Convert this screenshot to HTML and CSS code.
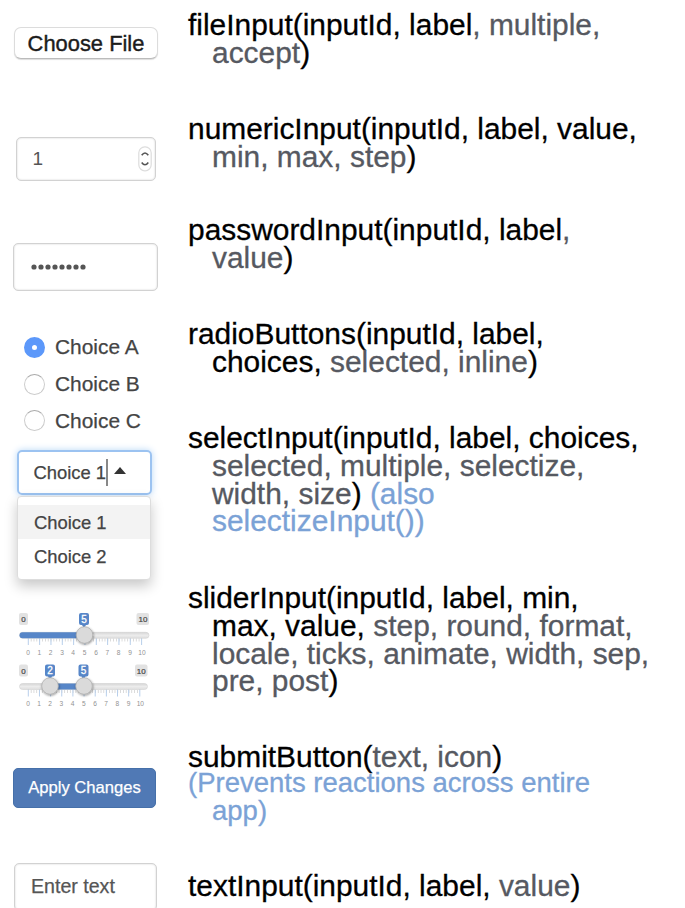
FILE: index.html
```html
<!DOCTYPE html>
<html lang="en">
<head>
<meta charset="utf-8">
<title>Shiny inputs</title>
<link rel="stylesheet" href="styles.css">
</head>
<body>
<main class="sheet">
  <section class="widgets">
    <button class="file">Choose File</button>
    <div class="box numeric"><span>1</span>
      <svg class="stepper" width="14" height="26" viewBox="0 0 14 26"><rect x=".8" y=".8" width="12.4" height="24" rx="6" fill="#fff" stroke="#ddd" stroke-width="1.2"/><path d="M3.700 9.200Q7 4.800 10.300 9.200M3.700 16.500Q7 20.900 10.300 16.500" fill="none" stroke="#555" stroke-width="1.6"/></svg>
    </div>
    <div class="box password"><svg width="56" height="8" viewBox="0 0 56 8"><path d="M3 4h50" stroke="#555" stroke-width="5.2" stroke-linecap="round" stroke-dasharray="0 7"/></svg></div>
    <div class="radios">
      <label class="choice"><i class="dot on"></i>Choice A</label>
      <label class="choice"><i class="dot"></i>Choice B</label>
      <label class="choice"><i class="dot"></i>Choice C</label>
    </div>
    <div class="select"><span>Choice 1</span><i class="caret"></i><i class="arrow"></i></div>
    <div class="menu">
      <div class="option active">Choice 1</div>
      <div class="option">Choice 2</div>
    </div>
    <svg class="sliders" width="160" height="108" viewBox="0 605 160 108">
      <defs>
        <linearGradient id="rail" x1="0" y1="0" x2="0" y2="1"><stop offset="0" stop-color="#d5d5d5"/><stop offset=".5" stop-color="#ececec"/><stop offset="1" stop-color="#dedede"/></linearGradient>
        <filter id="soft" x="-30%" y="-30%" width="160%" height="170%"><feDropShadow dx=".5" dy="1" stdDeviation=".8" flood-opacity=".45"/></filter>
      </defs>
      <g class="tag"><rect x="19" y="613" width="9" height="12" rx="2"/><rect x="136.500" y="613" width="12.500" height="12" rx="2"/><text x="23.500" y="622">0</text><text x="143" y="622">10</text></g>
      <g class="ticks">
        <path class="minor" d="M30.800 640h110.500"/>
        <path class="major" d="M27.800 641h114.300"/>
      </g>
      <rect x="19.500" y="632.300" width="129.500" height="6" rx="3" fill="url(#rail)" stroke="#ccc" stroke-width=".5"/>
      <path class="bar" d="M22.500 632.300H84v6H22.500a3 3 0 0 1 0-6z"/>
      <path class="bar" d="M81 613h6q2 0 2 2v8q0 2-2 2h-1l-2 3-2-3h-1q-2 0-2-2v-8q0-2 2-2z"/>
      <text class="value" x="84" y="622.800">5</text>
      <circle class="knob" cx="84.500" cy="635" r="8.300"/>
      <g class="num"><text x="28" y="655">0</text><text x="39.400" y="655">1</text><text x="50.600" y="655">2</text><text x="62" y="655">3</text><text x="73.200" y="655">4</text><text x="84.600" y="655">5</text><text x="96" y="655">6</text><text x="107.300" y="655">7</text><text x="118.600" y="655">8</text><text x="130" y="655">9</text><text x="142" y="655">10</text></g>

      <g class="tag"><rect x="19" y="664.500" width="9" height="12" rx="2"/><rect x="135" y="664.500" width="12.500" height="12" rx="2"/><text x="23.500" y="673.500">0</text><text x="141.300" y="673.500">10</text></g>
      <g class="ticks two">
        <path class="minor" d="M30.800 691.500h108.500"/>
        <path class="major" d="M27.800 692.500h112.500"/>
      </g>
      <rect x="19.500" y="683.500" width="128" height="6" rx="3" fill="url(#rail)" stroke="#ccc" stroke-width=".5"/>
      <rect class="bar" x="50" y="683.500" width="34" height="6"/>
      <path class="bar" d="M47 664.500h6q2 0 2 2v8q0 2-2 2h-1l-2 3-2-3h-1q-2 0-2-2v-8q0-2 2-2zM80.500 664.500h6q2 0 2 2v8q0 2-2 2h-1l-2 3-2-3h-1q-2 0-2-2v-8q0-2 2-2z"/>
      <text class="value" x="50" y="674.300">2</text><text class="value" x="83.500" y="674.300">5</text>
      <circle class="knob" cx="50" cy="686" r="8.300"/><circle class="knob" cx="84" cy="686" r="8.300"/>
      <g class="num"><text x="28" y="705.500">0</text><text x="39.100" y="705.500">1</text><text x="50.200" y="705.500">2</text><text x="61.400" y="705.500">3</text><text x="72.600" y="705.500">4</text><text x="83.800" y="705.500">5</text><text x="95" y="705.500">6</text><text x="106.100" y="705.500">7</text><text x="117.300" y="705.500">8</text><text x="128.500" y="705.500">9</text><text x="140.300" y="705.500">10</text></g>
    </svg>
    <button class="apply">Apply Changes</button>
    <div class="box entry">Enter text</div>
  </section>
  <section class="docs">
    <p class="fn r1">fileInput(inputId, label<b>, multiple,<br>accept</b>)</p>
    <p class="fn r2">numericInput(inputId, label, value,<br><b>min, max, step</b>)</p>
    <p class="fn r3">passwordInput(inputId, label<b>,<br>value</b>)</p>
    <p class="fn r4">radioButtons(inputId, label,<br>choices, <b>selected, inline</b>)</p>
    <p class="fn r5">selectInput(inputId, label, choices,<br><b>selected, multiple, selectize,<br>width, size</b>) <em>(also<br>selectizeInput())</em></p>
    <p class="fn r6">sliderInput(inputId, label, min,<br>max, value, <b>step, round, format,<br>locale, ticks, animate, width, sep,<br>pre, post</b>)</p>
    <p class="fn r7">submitButton(<b>text, icon</b>)</p>
    <p class="fn note"><em>(Prevents reactions across entire<br>app)</em></p>
    <p class="fn r8">textInput(inputId, label, <b>value</b>)</p>
  </section>
</main>
</body>
</html>
```
FILE: styles.css
```css
* { box-sizing: border-box; }
html, body { margin: 0; height: 908px; overflow: hidden; background: #fff; }
body { font-family: "Liberation Sans", Arial, sans-serif; color: #444; }
.sheet { display: grid; grid-template-columns: 188px 1fr; height: 908px; overflow: hidden; }
.widgets { display: flex; flex-direction: column; align-items: flex-start; padding-top: 27px; }
.widgets > * { flex: none; }
.docs { padding-top: 11px; }

.fn { margin: 0; padding-left: 24px; text-indent: -24px; font-size: 29.920px; line-height: 27.8px; color: #000; white-space: nowrap; -webkit-text-stroke: .3px; }
.fn b { font-weight: 400; color: #565961; }
.fn em { font-style: normal; color: #7ba2d6; }
.r1 { height: 104px; }
.r2 { height: 101px; }
.r3 { height: 104px; }
.r4 { height: 104px; }
.r5 { height: 160px; }
.r6 { height: 159px; }
.r7 { height: 26px; }
.note { height: 103px; font-size: 27.500px; }

button { font-family: inherit; padding: 0; white-space: nowrap; }
.file { width: 144px; height: 32px; margin-left: 14px; padding-top: 2px; border: 1px solid #dcdcdc; border-bottom-color: #bbb; border-radius: 7px; background: #fff; font-size: 21.900px; color: #1c1c1c; box-shadow: 0 1px 1px #ddd; -webkit-text-stroke: .4px; }
.box { border: 1.500px solid #d2d2d2; border-radius: 5px; display: flex; align-items: center; font-size: 19px; background: #fff; box-shadow: inset 0 0 2px #ccc; }
.numeric { width: 140px; height: 44px; margin: 78px 0 0 15.500px; padding: 0 3px 0 16px; justify-content: space-between; color: #555; }
.password { width: 145px; height: 48px; margin: 62px 0 0 12.500px; padding-left: 17px; }
.radios { margin: 38px 0 0 24px; display: flex; flex-direction: column; }
.choice { display: flex; align-items: center; gap: 10px; height: 36.700px; font-size: 20.900px; color: #444; -webkit-text-stroke: .25px; }
.dot { width: 21px; height: 21px; border-radius: 50%; border: 1.500px solid #ccc; border-top-color: #aaa; background: #fff; }
.dot.on { border: 8px solid #5c98fa; background: #fff; }
.select { width: 135px; height: 45px; margin: 11px 0 0 16.500px; border: 2px solid #9cc3f1; border-radius: 5px; box-shadow: 0 0 7px #b9d8f7; display: flex; align-items: center; padding-left: 15px; font-size: 18.400px; color: #444; -webkit-text-stroke: .25px; }
.caret { width: 2px; height: 27px; background: #888; }
.arrow { margin: -4px 0 0 6px; border: 6.500px solid transparent; border-top: 0; border-bottom: 7px solid #333; }
.menu { width: 134px; height: 84px; margin: 1px 0 0 17px; padding-top: 8px; border: 1px solid #ddd; border-radius: 4px; background: #fff; box-shadow: 0 6px 13px rgba(0,0,0,.22); }
.option { height: 34px; line-height: 35px; padding-left: 16px; font-size: 18.400px; color: #444; -webkit-text-stroke: .25px; }
.active { background: #f3f3f3; }
.sliders { margin-top: 25px; display: block; }
.sliders text { text-anchor: middle; font-size: 8px; fill: #444; }
.tag rect { fill: #e2e2e2; }
.sliders .tag text { stroke: #444; stroke-width: .2px; }
.bar { fill: #5786c8; }
.sliders .value { fill: #fff; font-size: 10px; stroke: #fff; stroke-width: .3px; }
.sliders .num text { fill: #929292; font-size: 6.600px; }
.knob { fill: #dadada; stroke: #aaa; stroke-width: .7px; filter: url(#soft); }
.minor { stroke: #ccc; stroke-width: 3px; stroke-dasharray: .7 2.140; }
.major { stroke: #b8cfeb; stroke-width: 8px; stroke-dasharray: 1 10.330; }
.two .minor { stroke-dasharray: .7 2.095; }
.two .major { stroke-dasharray: 1 10.150; }
.apply { width: 143px; height: 40px; margin: 54.500px 0 0 13px; border: 1px solid #4670a9; border-radius: 5px; background: #5079b5; color: #fff; font-size: 16.600px; -webkit-text-stroke: .25px; }
.entry { width: 143px; height: 48px; margin: 55px 0 0 14px; padding-left: 16px; font-size: 19.600px; color: #555; -webkit-text-stroke: .25px; }
```
